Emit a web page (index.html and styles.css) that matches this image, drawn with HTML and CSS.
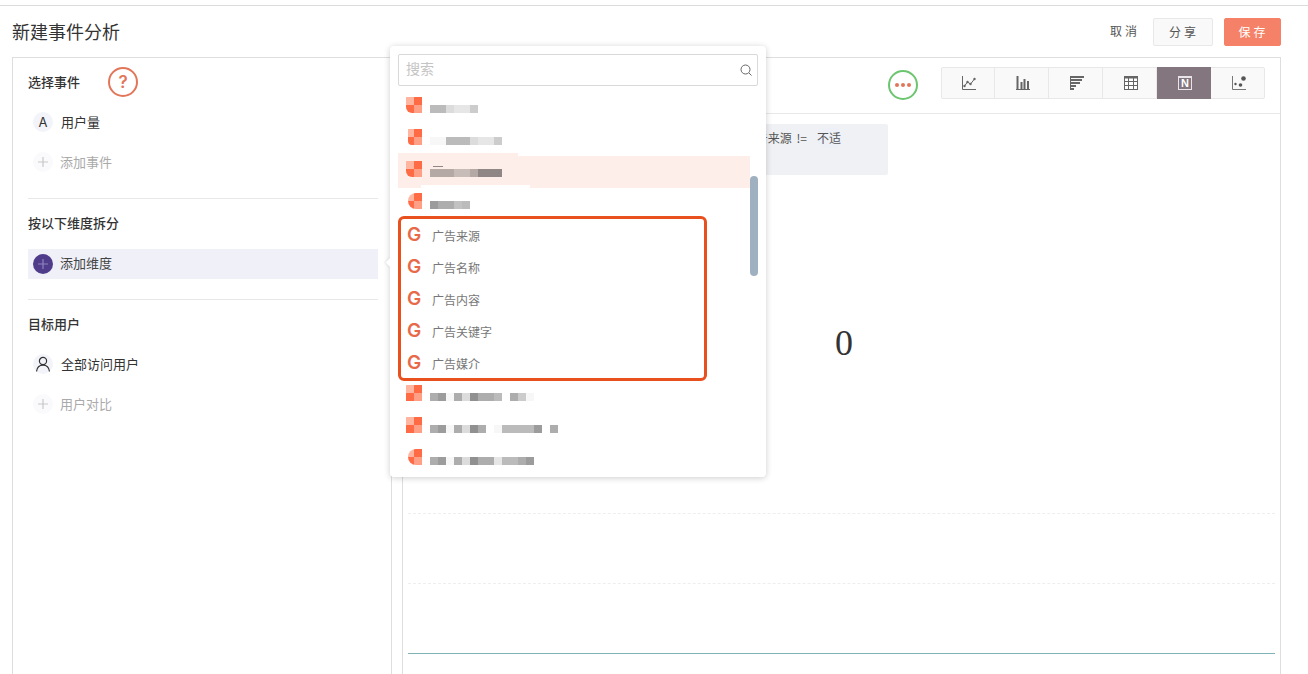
FILE: index.html
```html
<!DOCTYPE html>
<html lang="zh">
<head>
<meta charset="utf-8">
<title>新建事件分析</title>
<link rel="stylesheet" href="styles.css">
</head>
<body>
<div class="topstrip"></div>
<header class="header">
  <h1 class="title">新建事件分析</h1>
  <div class="actions">
    <span class="cancel">取消</span>
    <button class="btn">分享</button>
    <button class="btn btn-save">保存</button>
  </div>
</header>
<main class="main">
  <aside class="side">
    <div class="head-row">
      <h2 class="heading">选择事件</h2>
      <span class="help">?</span>
    </div>
    <div class="row"><span class="badge">A</span><span class="row-text">用户量</span></div>
    <div class="row muted"><span class="badge badge-add"><svg width="12" height="12" viewBox="0 0 12 12"><path d="M6 1v10M1 6h10" stroke="#c8c8c8" stroke-width="1.2"/></svg></span><span class="row-add">添加事件</span></div>
    <hr class="rule rule-a">
    <h2 class="heading heading-b">按以下维度拆分</h2>
    <div class="row row-active"><span class="badge badge-purple"><svg width="12" height="12" viewBox="0 0 12 12"><path d="M6 1v10M1 6h10" stroke="#8f82bd" stroke-width="1.2"/></svg></span><span class="row-add active-text">添加维度</span></div>
    <hr class="rule rule-b">
    <h2 class="heading heading-b heading-c">目标用户</h2>
    <div class="row"><span class="badge"><svg width="16" height="16" viewBox="0 0 16 16" fill="none" stroke="#333" stroke-width="1.2"><circle cx="8" cy="5" r="3.6"/><path d="M1.5 15.5c.5-4 3-6.400 6.500-6.400s6 2.400 6.500 6.400"/></svg></span><span class="row-text">全部访问用户</span></div>
    <div class="row muted"><span class="badge badge-add"><svg width="12" height="12" viewBox="0 0 12 12"><path d="M6 1v10M1 6h10" stroke="#c8c8c8" stroke-width="1.2"/></svg></span><span class="row-add">用户对比</span></div>
  </aside>
  <section class="panel">
    <div class="toolbar">
      <span class="more"><i></i><i></i><i></i></span>
      <div class="tabs">
        <span class="tab"><svg width="16" height="16" viewBox="0 0 16 16" fill="none" stroke="#666"><path d="M1.500 1v13.500H15"/><path d="M3.500 11l3-4 3 2 4-5"/><g fill="#666" stroke="none"><circle cx="3.500" cy="11" r="1.200"/><circle cx="6.500" cy="7" r="1.200"/><circle cx="9.500" cy="9" r="1.200"/><circle cx="13.500" cy="4" r="1.200"/></g></svg></span>
        <span class="tab"><svg width="16" height="16" viewBox="0 0 16 16" fill="none" stroke="#666" stroke-width="2"><path d="M2.500 1v13M6.500 7v7M9.500 4v10M13 6v8"/><path d="M1 14.500h14" stroke-width="1"/></svg></span>
        <span class="tab"><svg width="16" height="16" viewBox="0 0 16 16" fill="none" stroke="#666" stroke-width="1.800"><path d="M2 2h13M2 5h11M2 8h9M2 11h5M2 14h3"/><path d="M1.500 1v14" stroke-width="1"/></svg></span>
        <span class="tab"><svg width="16" height="16" viewBox="0 0 16 16" fill="none" stroke="#666"><rect x="1.500" y="1.500" width="13" height="13" fill="#fff"/><path d="M1.500 2.500h13" stroke-width="2"/><path d="M1.500 6.500h13M1.500 10.500h13M5.500 2v12.500M10.500 2v12.500"/></svg></span>
        <span class="tab tab-active"><span class="num-icon">N</span></span>
        <span class="tab"><svg width="16" height="16" viewBox="0 0 16 16" fill="none"><path d="M1.500 1v13.500H15" stroke="#777"/><circle cx="12.500" cy="3.500" r="2.300" fill="#555"/><circle cx="9.500" cy="10" r="1.800" fill="#555"/><circle cx="4.500" cy="9" r="1.200" fill="#555"/></svg></span>
      </div>
    </div>
    <div class="chart">
      <div class="filter"><span class="filter-key">广告来源 !=</span><span class="chip">不适</span></div>
      <div class="number">0</div>
      <div class="gridline"></div>
      <div class="gridline gridline-next"></div>
      <div class="axis"></div>
    </div>
  </section>
</main>

<div class="popup">
  <span class="notch"></span>
  <div class="search"><span class="placeholder">搜索</span><svg width="12" height="12" viewBox="0 0 12 12" fill="none" stroke="#666"><circle cx="5.500" cy="5.500" r="4.500"/><path d="M9 9l2.500 2.500"/></svg></div>
  <div class="list">
    <div class="item"><span class="chk chk-bl"></span><span class="mosaic"><i class="c8"></i><i class="c8"></i><i class="cd"></i><i class="ce"></i><i class="ce"></i><i class="cc"></i></span></div>
    <div class="item"><span class="chk chk-l"></span><span class="mosaic"><i class="cf"></i><i class="cf"></i><i class="c8"></i><i class="c8"></i><i class="c8"></i><i class="cd"></i><i class="ce"></i><i class="ce"></i><i class="cc"></i></span></div>
    <div class="item item-hl"><span class="chk chk-bl"></span><span class="mosaic mosaic-mark"><i class="p1"></i><i class="p1"></i><i class="p1"></i><i class="p2"></i><i class="p2"></i><i class="p1"></i><i class="p3"></i><i class="p3"></i><i class="p3"></i></span></div>
    <div class="item"><span class="chk chk-c"></span><span class="mosaic"><i class="c6"></i><i class="c7"></i><i class="c7"></i><i class="c9"></i><i class="c8"></i></span></div>
    <div class="item item-g"><span class="g">G</span><span class="item-text">广告来源</span></div>
    <div class="item item-g"><span class="g">G</span><span class="item-text">广告名称</span></div>
    <div class="item item-g"><span class="g">G</span><span class="item-text">广告内容</span></div>
    <div class="item item-g"><span class="g">G</span><span class="item-text">广告关键字</span></div>
    <div class="item item-g"><span class="g">G</span><span class="item-text">广告媒介</span></div>
    <div class="item"><span class="chk"></span><span class="mosaic"><i class="c7"></i><i class="c6"></i><i class="cf"></i><i class="c7"></i><i class="cd"></i><i class="c5"></i><i class="c7"></i><i class="c7"></i><i class="c8"></i><i></i><i class="c7"></i><i class="cc"></i><i class="cf"></i></span></div>
    <div class="item"><span class="chk"></span><span class="mosaic"><i class="c7"></i><i class="c6"></i><i class="cf"></i><i class="c7"></i><i class="cd"></i><i class="c5"></i><i class="c7"></i><i></i><i class="cf"></i><i class="c8"></i><i class="c8"></i><i class="c8"></i><i class="c8"></i><i class="c6"></i><i></i><i class="c7"></i></span></div>
    <div class="item"><span class="chk chk-c"></span><span class="mosaic"><i class="c7"></i><i class="c6"></i><i class="cf"></i><i class="c7"></i><i class="cd"></i><i class="c5"></i><i class="c7"></i><i class="c7"></i><i class="ce"></i><i class="c8"></i><i class="c8"></i><i class="c7"></i><i class="c6"></i></span></div>
  </div>
  <div class="annotation"></div>
  <div class="scrollbar"></div>
</div>
</body>
</html>
```

FILE: styles.css
```css
* { box-sizing: border-box; }
html, body { margin: 0; height: 674px; overflow: hidden; }
body {
  position: relative;
  background: #fff;
  color: #333;
  font-family: "Noto Sans CJK SC", "Liberation Sans", sans-serif;
  font-size: 13px;
}
.topstrip { height: 6px; border-bottom: 1px solid #dcdcdc; }

.header {
  height: 51px;
  padding: 12px 27px 0 12px;
  display: flex;
  justify-content: space-between;
  align-items: flex-start;
}
.title { margin: 0; padding-bottom: 2px; font-size: 18px; font-weight: 400; line-height: 26px; color: #333; }
.actions { display: flex; align-items: center; gap: 11px; }
.cancel { font-size: 12px; letter-spacing: 3px; color: #555; margin-right: 2px; line-height: 26px; padding-bottom: 2px; }
.btn {
  width: 60px;
  height: 28px;
  padding: 0 0 2px 2px;
  border: 1px solid #e8e8e8;
  border-radius: 2px;
  background: #f9f9f9;
  color: #555;
  font: inherit;
  font-size: 12px;
  letter-spacing: 3px;
}
.btn-save { width: 57px; background: #f58268; border-color: #f58268; color: #fff; }

.main { display: flex; padding: 0 27px 0 12px; gap: 10px; height: 617px; }

.side {
  width: 380px;
  flex: none;
  border: 1px solid #dedede;
  border-bottom: 0;
  padding: 14px 13px 0 15px;
}
.head-row { display: flex; align-items: center; height: 20px; margin-bottom: 10px; }
.heading { margin: 0; padding-top: 1px; padding-bottom: 1px; font-size: 13px; font-weight: 500; line-height: 18px; color: #333; }
.help {
  width: 30px;
  height: 30px;
  flex: none;
  margin-left: 28px;
  border: 2px solid #e2765a;
  border-radius: 50%;
  color: #e2765a;
  font-family: "Inter", sans-serif;
  font-size: 17px;
  font-weight: 600;
  line-height: 26px;
  text-align: center;
}
.row { display: flex; align-items: center; height: 40px; padding-left: 5px; }
.badge {
  width: 20px;
  height: 20px;
  flex: none;
  display: flex;
  align-items: center;
  justify-content: center;
  border-radius: 50%;
  background: #f3f4f9;
  font-family: "Inter", sans-serif;
  font-size: 13px;
  font-weight: 400;
  color: #333;
}
.badge-add { background: #fafafc; }
.badge-purple { background: #4f3d8c; }
.row-text { margin-left: 8px; padding-bottom: 2px; font-size: 13px; color: #333; }
.row-add { margin-left: 7px; padding-bottom: 2px; font-size: 13px; color: #aaa; }
.active-text { color: #444; padding-bottom: 4px; }
.rule { margin: 0; border: 0; border-top: 1px solid #e8e8e8; }
.rule-a { margin-top: 16px; }
.rule-b { margin-top: 20px; }
.heading-b { margin-top: 14px; }
.heading-c { margin-bottom: 10px; }
.row-active { height: 30px; margin-top: 16px; background: #eff0f8; }

.panel { flex: 1; min-width: 0; border: 1px solid #dedede; border-bottom: 0; }
.toolbar {
  height: 56px;
  padding: 9px 15px 0 0;
  border-bottom: 1px solid #e8e8e8;
  display: flex;
  justify-content: flex-end;
  align-items: flex-start;
  gap: 23px;
}
.more {
  width: 30px;
  height: 30px;
  margin-top: 3px;
  border: 2px solid #6cc56f;
  border-radius: 50%;
  display: flex;
  align-items: center;
  justify-content: center;
  gap: 2px;
}
.more i { width: 4px; height: 4px; border-radius: 50%; background: #e2765a; }
.tabs { display: flex; border: 1px solid #e8e8e8; border-radius: 2px; height: 32px; background: #f9f9f9; }
.tab {
  width: 54px;
  display: flex;
  align-items: center;
  justify-content: center;
  border-right: 1px solid #e8e8e8;
  margin-top: -1px;
  margin-bottom: -1px;
  padding-left: 2px;
}
.tab:first-child { width: 53px; }
.tab:last-child { border-right: 0; width: 53px; }
.tab-active { background: #83767f; border-right: 0; }
.num-icon {
  width: 14px;
  height: 14px;
  border: 1px solid #e8e4e8;
  border-top-width: 2px;
  color: #fff;
  font-family: "Liberation Sans", sans-serif;
  font-size: 11px;
  font-weight: 700;
  line-height: 11px;
  text-align: center;
}

.chart { padding: 10px 5px 0; }
.filter {
  height: 51px;
  padding: 4px 46px 0 0;
  width: 480px;
  background: #f0f1f4;
  border-radius: 2px;
  display: flex;
  justify-content: flex-end;
  align-items: flex-start;
  gap: 10px;
  font-size: 12px;
  line-height: 20px;
  color: #555;
}
.filter-key { word-spacing: 2px; }
.chip { background: #eef0f8; border-radius: 8px; padding: 0 1px 0 0; }
.number {
  height: 337px;
  padding: 0 0 2px 5px;
  display: flex;
  align-items: center;
  justify-content: center;
  font-family: "Liberation Serif", serif;
  font-size: 36px;
  color: #333;
}
.gridline { margin-top: 1px; border-top: 1px dashed #eeeeee; }
.gridline-next { margin-top: 69px; }
.axis { margin-top: 69px; border-top: 1px solid #7fb3b5; }

/* dropdown over the page */
.popup {
  position: absolute;
  left: 390px;
  top: 46px;
  width: 376px;
  height: 431px;
  padding: 8px;
  background: #fff;
  border-radius: 4px;
  box-shadow: 0 1px 6px rgba(0, 0, 0, 0.2);
}
.notch {
  position: absolute;
  left: -3px;
  top: 213px;
  width: 7px;
  height: 7px;
  background: #fff;
  transform: rotate(45deg);
  box-shadow: -1px 1px 2px rgba(0, 0, 0, 0.08);
}
.search {
  height: 32px;
  padding: 0 5px 0 7px;
  border: 1px solid #d9d9d9;
  border-radius: 2px;
  display: flex;
  align-items: center;
  justify-content: space-between;
}
.placeholder { padding-bottom: 4px; font-size: 14px; color: #c4c4c4; }
.list { margin-top: 6px; width: 352px; }
.item { position: relative; display: flex; align-items: flex-start; height: 32px; padding-left: 8px; }
.item-hl { background: #fdeeea; }
.item-hl::before {
  content: "";
  position: absolute;
  left: 0;
  top: -3px;
  width: 120px;
  height: 3px;
  background: #fdeeea;
}
.item-hl::after {
  content: "";
  position: absolute;
  left: 23px;
  bottom: 0;
  width: 109px;
  height: 3px;
  background: #fff;
}
.chk {
  width: 16px;
  height: 16px;
  margin-top: 5px;
  flex: none;
  background: conic-gradient(#ff6b45 0 25%, #ff9f85 0 50%, #ff6b45 0 75%, #ffb5a0 0);
}
.chk-bl { border-bottom-left-radius: 6px; }
.chk-l { clip-path: inset(0 0 0 2px round 0 0 0 4px); }
.chk-c { clip-path: inset(0 0 0 2px round 8px 0 0 8px); }
.mosaic { display: flex; margin: 13px 0 0 8px; height: 8px; position: relative; z-index: 1; }
.mosaic i { width: 8px; height: 8px; display: block; }
.mosaic-mark::before {
  content: "";
  position: absolute;
  left: 3px;
  top: -3px;
  width: 10px;
  height: 1px;
  background: #8f8785;
}
.c5 { background: #909090; }
.c6 { background: #9c9c9c; }
.c7 { background: #adadad; }
.c8 { background: #bbbbbb; }
.c9 { background: #c2c2c2; }
.cc { background: #cccccc; }
.cd { background: #dcdcdc; }
.ce { background: #e6e6e6; }
.cf { background: #f7f7f7; }
.p1 { background: #b5a9a6; }
.p2 { background: #c8bcb9; }
.p3 { background: #8f8785; }
.g {
  width: 16px;
  flex: none;
  font-family: "Inter", sans-serif;
  font-size: 19px;
  font-weight: 600;
  line-height: 29px;
  text-align: center;
  color: #e8694a;
}
.item-text { margin-left: 10px; font-size: 12px; line-height: 32px; color: #777; }
.annotation {
  position: absolute;
  left: 8px;
  top: 170px;
  width: 309px;
  height: 165px;
  border: 3px solid #e8501e;
  border-radius: 6px;
  pointer-events: none;
}
.scrollbar {
  position: absolute;
  left: 360px;
  top: 130px;
  width: 8px;
  height: 100px;
  border-radius: 4px;
  background: #9fb1c0;
}
```
